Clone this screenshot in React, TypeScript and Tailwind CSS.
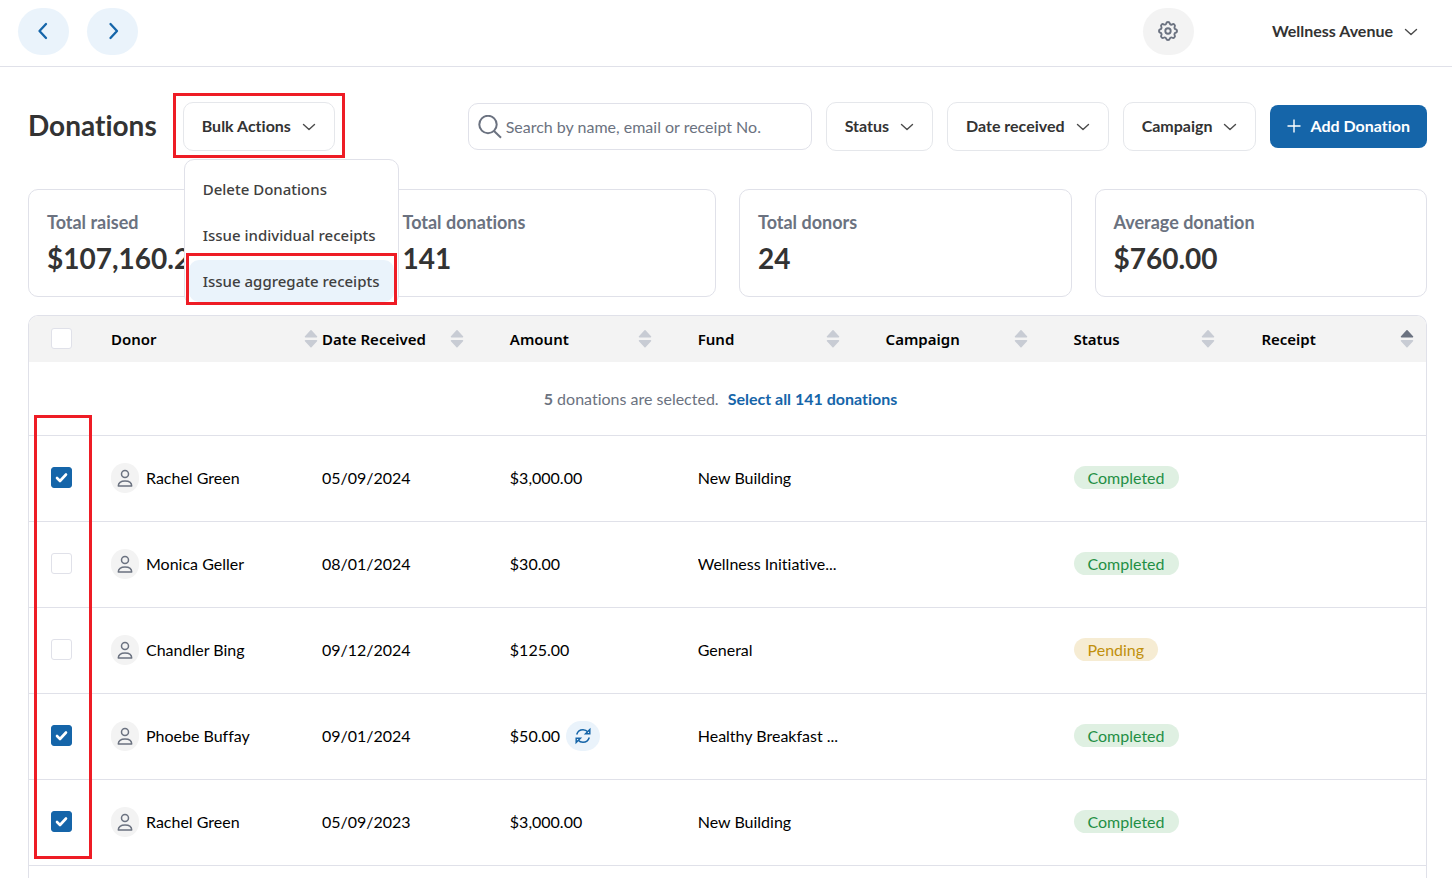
import React, { useState } from "react";
import { clsx } from "clsx";

type Donation = {
  donor: string;
  date: string;
  amount: string;
  fund: string;
  status: "Completed" | "Pending";
  selected: boolean;
  recurring?: boolean;
};

const donations: Donation[] = [
  { donor: "Rachel Green", date: "05/09/2024", amount: "$3,000.00", fund: "New Building", status: "Completed", selected: true },
  { donor: "Monica Geller", date: "08/01/2024", amount: "$30.00", fund: "Wellness Initiative...", status: "Completed", selected: false },
  { donor: "Chandler Bing", date: "09/12/2024", amount: "$125.00", fund: "General", status: "Pending", selected: false },
  { donor: "Phoebe Buffay", date: "09/01/2024", amount: "$50.00", fund: "Healthy Breakfast ...", status: "Completed", selected: true, recurring: true },
  { donor: "Rachel Green", date: "05/09/2023", amount: "$3,000.00", fund: "New Building", status: "Completed", selected: true },
];

const stats = [
  { label: "Total raised", value: "$107,160.25" },
  { label: "Total donations", value: "141" },
  { label: "Total donors", value: "24" },
  { label: "Average donation", value: "$760.00" },
];

const columns = [
  { label: "Donor", width: "w-[15.1%]", pad: "pr-1" },
  { label: "Date Received", width: "w-[13.45%]", pad: "pr-[46px]" },
  { label: "Amount", width: "w-[13.45%]", pad: "pr-[46px]" },
  { label: "Fund", width: "w-[13.45%]", pad: "pr-[46px]" },
  { label: "Campaign", width: "w-[13.45%]", pad: "pr-[46px]" },
  { label: "Status", width: "w-[13.45%]", pad: "pr-[46px]" },
  { label: "Receipt", width: "", pad: "pr-3" },
];

const bulkActions = ["Delete Donations", "Issue individual receipts", "Issue aggregate receipts"];

const ChevronDown = () => (
  <svg width="14" height="14" viewBox="0 0 14 14" fill="none" stroke="#4b4b4b" strokeWidth="1.4" strokeLinecap="round" strokeLinejoin="round" aria-hidden="true">
    <path d="M1.5 5.5 7 10.5l5.5-5" />
  </svg>
);

const Arrow = ({ d }: { d: string }) => (
  <svg width="18" height="18" viewBox="0 0 18 18" fill="none" stroke="#1565a9" strokeWidth="2.3" strokeLinecap="round" strokeLinejoin="round" aria-hidden="true">
    <path d={d} />
  </svg>
);

const GearIcon = () => (
  <svg width="24" height="24" viewBox="0 0 24 24" fill="none" stroke="#6b7280" strokeWidth="1.9" strokeLinecap="round" strokeLinejoin="round" aria-hidden="true">
    <path d="M10.3 4.3c.4-1.8 3-1.8 3.4 0a1.7 1.7 0 0 0 2.6 1.1c1.5-1 3.3.8 2.4 2.4a1.7 1.7 0 0 0 1 2.5c1.8.4 1.8 3 0 3.4a1.7 1.7 0 0 0-1 2.6c.9 1.5-.9 3.3-2.4 2.4a1.7 1.7 0 0 0-2.6 1c-.4 1.8-3 1.8-3.4 0a1.7 1.7 0 0 0-2.6-1c-1.5.9-3.3-.9-2.4-2.4a1.7 1.7 0 0 0-1-2.6c-1.8-.4-1.8-3 0-3.4a1.7 1.7 0 0 0 1-2.5c-.9-1.6.9-3.4 2.4-2.4 1 .6 2.3.1 2.6-1.1z" />
    <circle cx="12" cy="12" r="2.7" />
  </svg>
);

const SearchIcon = () => (
  <svg width="24" height="24" viewBox="0 0 24 24" fill="none" stroke="#6b7280" strokeWidth="2" aria-hidden="true" className="shrink-0">
    <circle cx="10" cy="9.5" r="8.7" />
    <path d="m16 16 7 6.7" />
  </svg>
);

const PersonIcon = () => (
  <svg width="16" height="18" viewBox="0 0 16 18" fill="none" stroke="#6b7280" strokeWidth="1.5" strokeLinejoin="round" aria-hidden="true">
    <circle cx="8" cy="5" r="3.5" />
    <path d="M1.3 17c0-3.2 2.5-5 6.7-5s6.7 1.8 6.7 5z" />
  </svg>
);

const RecurringIcon = () => (
  <svg width="18" height="18" viewBox="0 0 18 18" fill="none" stroke="#1565a9" strokeWidth="1.5" aria-hidden="true">
    <path d="M2.7 7.4C3.6 4.6 6 2.7 9 2.7c2 0 3.8.9 5 2.3" />
    <path d="M15.8 2.5v4.3h-4.2z" />
    <path d="M15.3 10.6c-.9 2.8-3.3 4.7-6.3 4.7-2 0-3.8-.9-5-2.3" />
    <path d="M2.2 15.5v-4.3h4.2z" />
  </svg>
);

const SortIcon = ({ active }: { active?: boolean }) => (
  <svg width="14" height="18" viewBox="0 0 14 18" strokeWidth="1.5" strokeLinejoin="round" aria-hidden="true">
    <path d="M7 .8 12.5 6.800H1.500z" fill={active ? "#6b7280" : "#c8ccd4"} stroke={active ? "#6b7280" : "#c8ccd4"} />
    <path d="M7 16.700 12.500 10.700H1.500z" fill="#c8ccd4" stroke="#c8ccd4" />
  </svg>
);

const Checkbox = ({ label, defaultChecked }: { label: string; defaultChecked?: boolean }) => (
  <span className="grid size-[21px] place-items-center">
    <input
      type="checkbox"
      aria-label={label}
      defaultChecked={defaultChecked}
      className="peer col-start-1 row-start-1 size-[21px] appearance-none rounded-[3px] border border-[#e0e1e9] bg-white checked:border-[#1565a9] checked:bg-[#1565a9]"
    />
    <svg
      width="13"
      height="11"
      viewBox="0 0 13 11"
      fill="none"
      stroke="white"
      strokeWidth="2.6"
      strokeLinecap="round"
      strokeLinejoin="round"
      aria-hidden="true"
      className="pointer-events-none invisible col-start-1 row-start-1 peer-checked:visible"
    >
      <path d="m2 6 3 3 6-6.5" />
    </svg>
  </span>
);

const DropdownButton = ({ label, onClick }: { label: string; onClick?: () => void }) => (
  <button
    type="button"
    aria-haspopup="menu"
    onClick={onClick}
    className="flex h-[49px] shrink-0 items-center gap-[11px] rounded-[10px] border border-[#e5e7eb] bg-white px-[18px] pb-[2px] font-bold whitespace-nowrap text-[#333333]"
  >
    {label}
    <ChevronDown />
  </button>
);

const Header = () => (
  <header className="flex h-[67px] items-center border-b border-[#e0e1e9] px-[18px] pb-1">
    <nav className="flex gap-[18px]">
      <button type="button" aria-label="Back" className="flex h-[47px] w-[51px] items-center justify-center rounded-full bg-[#eaf3fb]">
        <Arrow d="M11 2 4.5 9l6.5 7" />
      </button>
      <button type="button" aria-label="Forward" className="flex h-[47px] w-[51px] items-center justify-center rounded-full bg-[#eaf3fb]">
        <Arrow d="m6.500 2 6.500 7-6.500 7" />
      </button>
    </nav>
    <button type="button" aria-label="Settings" className="ml-auto flex h-[47px] w-[51px] items-center justify-center rounded-full bg-[#f3f3f3]">
      <GearIcon />
    </button>
    <button type="button" className="mr-4 ml-[78px] flex items-center gap-[11px] font-bold text-[#333333]">
      Wellness Avenue
      <ChevronDown />
    </button>
  </header>
);

const BulkActions = () => {
  const [open, setOpen] = useState(true);

  return (
    <div className="relative ml-[26px]">
      <DropdownButton label="Bulk Actions" onClick={() => setOpen(!open)} />
      <div className="pointer-events-none absolute -inset-x-[10px] -top-[9px] -bottom-[7px] border-3 border-[#ee1c25]" />
      {open && (
        <div role="menu" className="absolute top-[57px] left-px z-10 flex w-[215px] flex-col rounded-[10px] border border-[#e0e1e9] bg-white px-1 pt-[6px]">
          {bulkActions.map((action, idx) => (
            <div key={action} className="relative py-[2px]">
              <button
                type="button"
                role="menuitem"
                className={clsx(
                  "block h-[42px] w-full rounded-[10px] px-[14px] text-left font-['Noto_Sans',sans-serif] text-[15px] font-medium whitespace-nowrap text-[#404040]",
                  idx === 2 && "bg-[#eaf3fb]"
                )}
              >
                {action}
              </button>
              {idx === 2 && (
                <div className="pointer-events-none absolute -inset-x-[3px] -top-[5px] -bottom-px border-3 border-[#ee1c25]" />
              )}
            </div>
          ))}
        </div>
      )}
    </div>
  );
};

const Toolbar = () => (
  <div className="flex items-center">
    <h1 className="pb-1 text-[28px] font-bold text-[#333333]">Donations</h1>
    <BulkActions />
    <div className="ml-auto flex items-center gap-[14px]">
      <label className="flex h-[47px] w-[344px] items-center gap-1 rounded-[10px] border border-[#e0e1e9] px-[9px]">
        <SearchIcon />
        <input
          type="text"
          aria-label="Search donations"
          placeholder="Search by name, email or receipt No."
          className="min-w-0 flex-1 text-base outline-none placeholder:text-[#6b7280]"
        />
      </label>
      <DropdownButton label="Status" />
      <DropdownButton label="Date received" />
      <DropdownButton label="Campaign" />
      <button type="button" className="flex h-[43px] shrink-0 items-center gap-[9px] rounded-lg bg-[#1565a9] px-[17px] pb-[2px] font-bold text-white">
        <svg width="14" height="14" viewBox="0 0 14 14" fill="none" stroke="white" strokeWidth="1.4" aria-hidden="true">
          <path d="M7 .5v13M.5 7h13" />
        </svg>
        Add Donation
      </button>
    </div>
  </div>
);

const StatCards = () => (
  <div className="mt-[38px] grid grid-cols-4 gap-[23px]">
    {stats.map((stat) => (
      <div key={stat.label} className="h-[108px] rounded-[10px] border border-[#e0e1e9] px-[18px] pt-5">
        <p className="text-lg leading-6 font-bold text-[#6b7280]">{stat.label}</p>
        <p className="mt-[6px] text-[28px] leading-9 font-bold text-[#333333]">{stat.value}</p>
      </div>
    ))}
  </div>
);

const DonationsTable = () => (
  <div className="relative mt-[18px] rounded-t-[10px] border border-b-0 border-[#e0e1e9]">
    <table className="w-full table-fixed text-left">
      <thead>
        <tr className="h-[46px] bg-[#f3f3f3]">
          <th className="w-[82px] rounded-tl-[9px] pb-[2px] pl-[22px]">
            <Checkbox label="Select all donations" />
          </th>
          {columns.map((col, idx) => (
            <th key={col.label} className={clsx(col.width, col.pad, idx === 6 && "rounded-tr-[9px]")}>
              <button type="button" className="flex w-full items-center justify-between font-['Noto_Sans',sans-serif] text-[15px] font-semibold text-black">
                {col.label}
                <SortIcon active={idx === 6} />
              </button>
            </th>
          ))}
        </tr>
      </thead>
      <tbody>
        <tr className="h-[73px]">
          <td colSpan={8} className="pt-[2px] pr-[14px] text-center text-[#6b7280]">
            <b className="font-bold">5</b> donations are selected.
            <a href="#all" className="ml-[9px] font-bold text-[#1565a9]">
              Select all 141 donations
            </a>
          </td>
        </tr>
        {donations.map((row, idx) => (
          <tr key={`${row.donor}-${idx}`} className="h-[86px] border-y border-[#e0e1e9]">
            <td className="pb-[2px] pl-[22px]">
              <Checkbox label={`Select ${row.donor}, ${row.date}`} defaultChecked={row.selected} />
            </td>
            <td>
              <div className="flex items-center gap-[7px]">
                <span className="flex h-[30px] w-7 items-center justify-center rounded-full bg-[#f3f3f3]">
                  <PersonIcon />
                </span>
                {row.donor}
              </div>
            </td>
            <td>{row.date}</td>
            <td>
              <div className="flex items-center gap-[6px]">
                {row.amount}
                {row.recurring && (
                  <span className="flex h-[30px] w-[34px] items-center justify-center rounded-full bg-[#eaf3fb]">
                    <RecurringIcon />
                  </span>
                )}
              </div>
            </td>
            <td className="truncate">{row.fund}</td>
            <td />
            <td>
              <span
                className={clsx(
                  "inline-block h-[23px] rounded-full px-[14px] leading-6",
                  row.status === "Completed" ? "bg-[#dff0e2] text-[#1f8f45]" : "bg-[#f6ecd3] text-[#c1900c]"
                )}
              >
                {row.status}
              </span>
            </td>
            <td />
          </tr>
        ))}
        <tr className="h-[86px]">
          <td colSpan={8} />
        </tr>
      </tbody>
    </table>
    <div className="pointer-events-none absolute top-[99px] left-[5px] h-[444px] w-[58px] border-3 border-[#ee1c25]" />
  </div>
);

export default function App() {
  return (
    <div className="h-screen overflow-hidden bg-white font-[Lato,sans-serif] text-base text-black [font-variant-ligatures:none]">
      <Header />
      <main className="pt-[35px] pr-[25px] pl-7">
        <Toolbar />
        <StatCards />
        <DonationsTable />
      </main>
    </div>
  );
}
